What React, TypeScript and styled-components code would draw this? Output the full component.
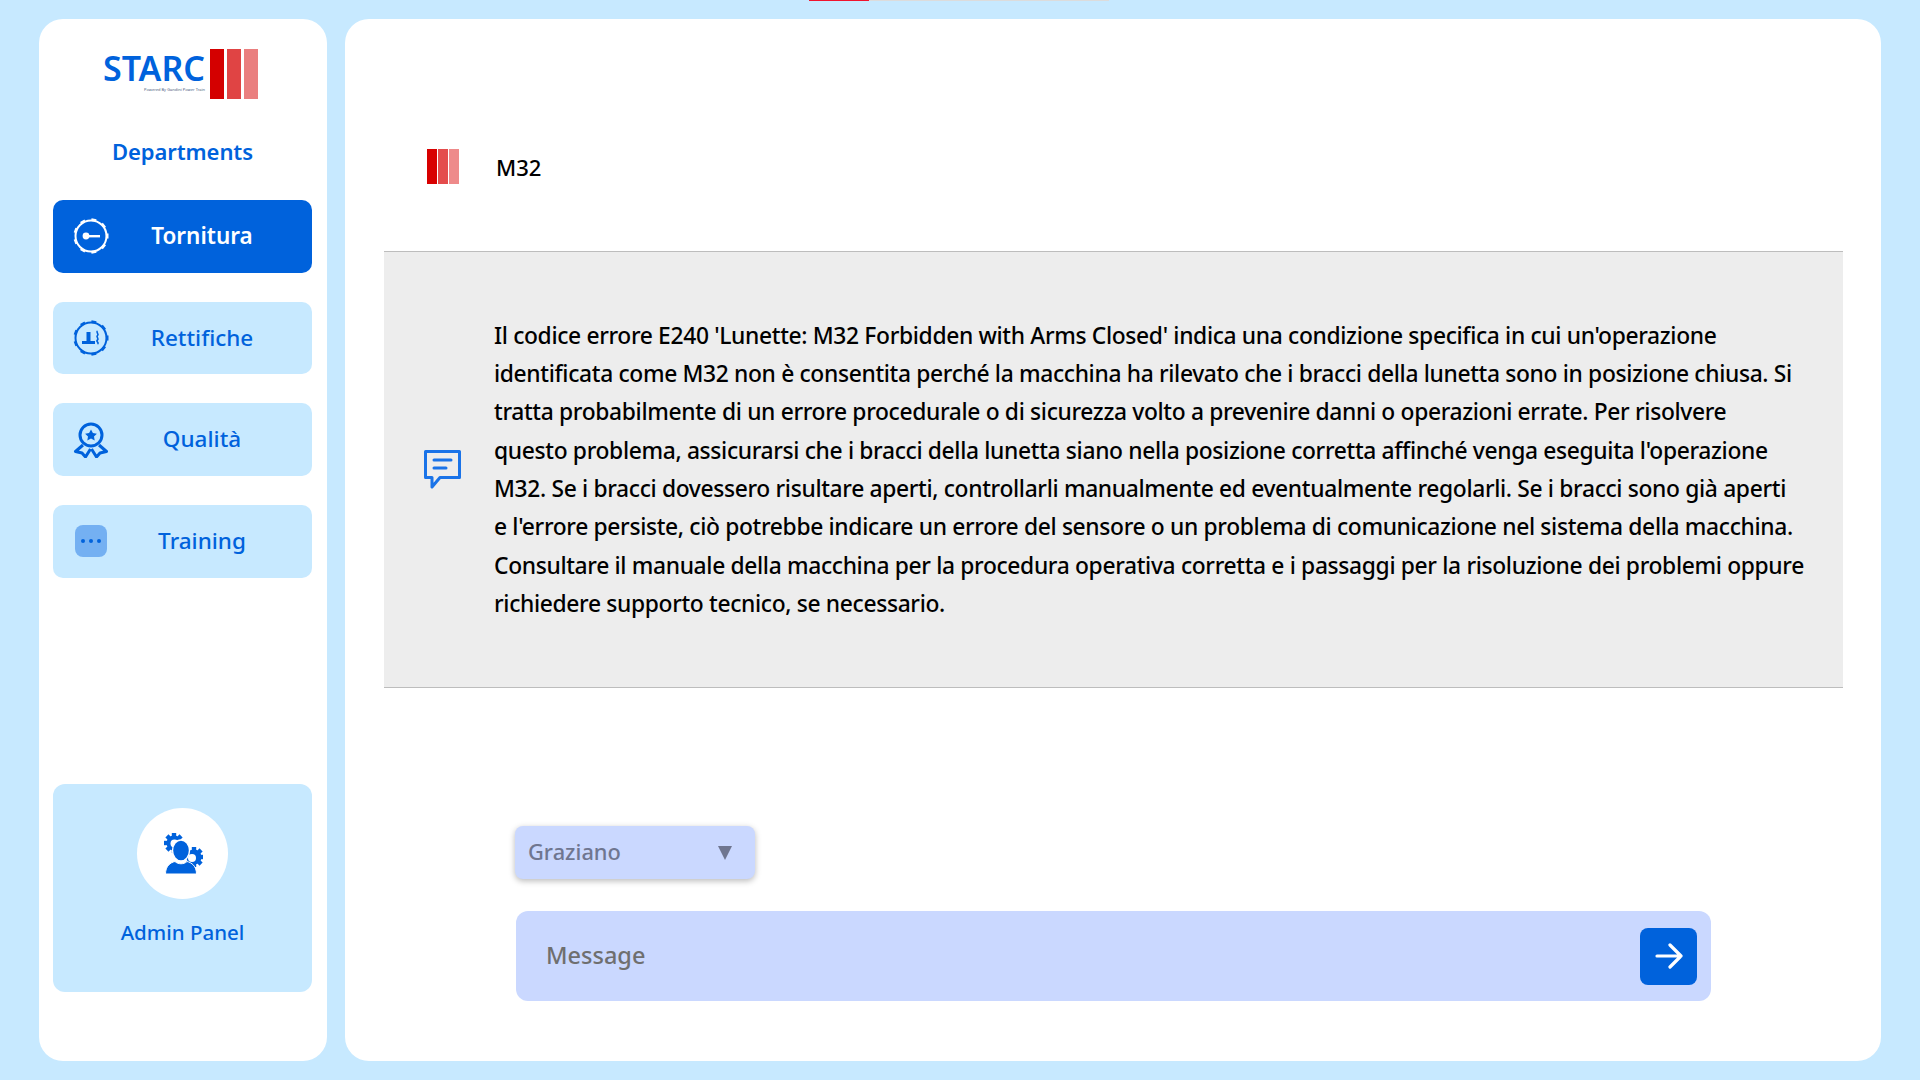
import React from "react";
import styled, { createGlobalStyle } from "styled-components";

const BLUE = "#0062dc";
const SKY = "#c7e9ff";
const PERI = "#cad8ff";
const FONT = `"Noto Sans", "Open Sans", sans-serif`;

const Global = createGlobalStyle`
  html, body { margin: 0; padding: 0; height: 100%; background: ${SKY}; }
  body { font-family: ${FONT}; overflow: hidden; }
  * { box-sizing: border-box; }
`;

const Progress = styled.div`
  position: fixed;
  top: 0;
  left: 809px;
  width: 300px;
  height: 1px;
  background: #dcdcdc;
`;
const ProgressFill = styled.div`
  width: 60px;
  height: 100%;
  background: #f0132d;
`;

const Page = styled.div`
  display: flex;
  gap: 18px;
  width: 1920px;
  height: 1080px;
  padding: 19px 39px 19px 39px;
`;

const Sidebar = styled.aside`
  width: 288px;
  background: #fff;
  border-radius: 24px;
  padding: 30px 15px 69px 14px;
  display: flex;
  flex-direction: column;
`;

const Logo = styled.div`
  display: flex;
  align-items: flex-start;
  justify-content: center;
  gap: 5px;
  height: 50px;
  padding-right: 4px;
`;
const LogoWords = styled.div`
  display: flex;
  flex-direction: column;
  align-items: flex-end;
  padding-top: 4px;
`;
const LogoName = styled.span`
  font-size: 34px;
  line-height: 30px;
  font-weight: 600;
  color: ${BLUE};
`;
const LogoTag = styled.span`
  font-size: 4px;
  line-height: 6px;
  color: #4a5d80;
  margin-top: 4px;
`;
const LogoBars = styled.div`
  display: flex;
  gap: 3px;
`;
const LogoBar = styled.span<{ $c: string }>`
  width: 14px;
  height: 50px;
  background: ${(p) => p.$c};
`;

const Title = styled.h2`
  margin: 36px 0 33px;
  height: 32px;
  font-size: 22px;
  line-height: 32px;
  font-weight: 600;
  color: ${BLUE};
  text-align: center;
  letter-spacing: -0.1px;
`;

const Nav = styled.nav`
  display: flex;
  flex-direction: column;
  gap: 29px;
`;

const NavItem = styled.div<{ $active?: boolean }>`
  height: 72.7px;
  border-radius: 10px;
  display: flex;
  align-items: center;
  padding: 0 17px 0 20px;
  background: ${(p) => (p.$active ? BLUE : SKY)};
  color: ${(p) => (p.$active ? "#fff" : BLUE)};
`;
const NavLabel = styled.span<{ $active?: boolean }>`
  flex: 1;
  text-align: center;
  font-size: 22.5px;
  line-height: 30px;
  padding-bottom: 1px;
  font-weight: ${(p) => (p.$active ? 600 : 500)};
`;

const AdminCard = styled.div`
  margin-top: auto;
  height: 208px;
  border-radius: 12px;
  background: ${SKY};
  padding-top: 24px;
  display: flex;
  flex-direction: column;
  align-items: center;
`;
const AdminCircle = styled.div`
  width: 91px;
  height: 91px;
  border-radius: 50%;
  background: #fff;
  color: ${BLUE};
  display: flex;
  align-items: center;
  justify-content: center;
`;
const AdminLabel = styled.span`
  margin-top: 17px;
  font-size: 20.5px;
  line-height: 32px;
  font-weight: 500;
  color: ${BLUE};
`;

const Main = styled.main`
  flex: 1;
  background: #fff;
  border-radius: 24px;
  padding: 0 38px 0 39px;
  display: flex;
  flex-direction: column;
`;

const Header = styled.header`
  height: 232px;
  padding: 130px 0 0 43px;
  display: flex;
  align-items: flex-start;
  gap: 37px;
`;
const HeaderBars = styled.div`
  display: flex;
  gap: 1px;
`;
const HeaderBar = styled.span<{ $c: string }>`
  width: 10px;
  height: 35px;
  background: ${(p) => p.$c};
`;
const HeaderTitle = styled.span`
  font-size: 22px;
  line-height: 37px;
  font-weight: 500;
  color: #000;
`;

const Reply = styled.section`
  height: 437px;
  background: #ededed;
  border-top: 1px solid #bdbdbd;
  border-bottom: 1px solid #bdbdbd;
  padding-left: 40px;
  display: flex;
  align-items: center;
  gap: 33px;
  color: ${BLUE};
`;
const ReplyText = styled.div`
  font-size: 22.8px;
  line-height: 38.3px;
  font-weight: 500;
  letter-spacing: -0.335px;
  color: #000;
  padding-top: 1px;
`;
const ReplyLine = styled.span`
  display: block;
  white-space: nowrap;
`;

const Composer = styled.div`
  margin: 138px 0 0 131px;
  width: 1196px;
  display: flex;
  flex-direction: column;
  gap: 32px;
`;
const Picker = styled.div`
  width: 240px;
  height: 53px;
  border-radius: 8px;
  background: ${PERI};
  box-shadow: 0 2px 6px rgba(0, 0, 0, 0.28);
  padding: 0 23px 2px 13px;
  display: flex;
  align-items: center;
  justify-content: space-between;
  font-size: 21.8px;
  font-weight: 500;
  color: #6f7690;
`;
const Caret = styled.span`
  width: 0;
  height: 0;
  margin-top: 2px;
  border-left: 7px solid transparent;
  border-right: 7px solid transparent;
  border-top: 14px solid #6f7690;
`;
const MessageBar = styled.div`
  height: 90px;
  margin-left: 1px;
  border-radius: 12px;
  background: ${PERI};
  padding: 0 14px 0 30px;
  display: flex;
  align-items: center;
`;
const MessageInput = styled.input`
  flex: 1;
  border: 0;
  outline: 0;
  padding: 0 0 2px;
  background: transparent;
  font-family: ${FONT};
  font-size: 23.5px;
  font-weight: 500;
  &::placeholder { color: #6f6f6f; opacity: 1; }
`;
const SendButton = styled.button`
  width: 57px;
  height: 57px;
  border: 0;
  padding: 0;
  border-radius: 8px;
  background: ${BLUE};
  color: #fff;
  display: flex;
  align-items: center;
  justify-content: center;
`;

const GearRing: React.FC<{ children: React.ReactNode }> = ({ children }) => (
  <svg width="36" height="36" viewBox="0 0 36 36" fill="none" stroke="currentColor">
    <circle cx="18" cy="18" r="15.5" strokeWidth="2" />
    {[0, 40, 80, 120, 160, 200, 240, 280, 320].map((a) => (
      <rect key={a} x="15.5" y="0.5" width="5" height="2.6" fill="currentColor" stroke="none" transform={`rotate(${a + 10} 18 18)`} />
    ))}
    {children}
  </svg>
);

const TurnIcon = () => (
  <GearRing>
    <circle cx="13" cy="18" r="3.4" fill="currentColor" stroke="none" />
    <rect x="16" y="17" width="11" height="2.4" fill="currentColor" stroke="none" />
  </GearRing>
);
const GrindIcon = () => (
  <GearRing>
    <rect x="9" y="21" width="13" height="3" fill="currentColor" stroke="none" />
    <rect x="13.5" y="12" width="4" height="9" fill="currentColor" stroke="none" />
    <path d="M24.5 11c-2 1.5 2 3 0 4.5s2 3 0 4.5 2 2.5 0 4" strokeWidth="1.6" />
  </GearRing>
);
const AwardIcon = () => (
  <svg width="36" height="36" viewBox="0 0 36 36" fill="none" stroke="currentColor" strokeWidth="3" strokeLinejoin="round">
    <circle cx="18" cy="13" r="11" />
    <path fill="currentColor" stroke="none" d="M18 7.5l1.900 3.600 4 .6-2.900 2.800.7 4-3.700-1.900-3.700 1.900.7-4-2.900-2.800 4-.6z" />
    <path d="M10 23L2.500 29.500l6.500 1.500 3.500 4 5-8" />
    <path d="M26 23l7.500 6.500-6.500 1.500-3.500 4-5-8" />
  </svg>
);
const DotsTile = styled.div`
  width: 32px;
  height: 32px;
  margin: 0 2px;
  border-radius: 8px;
  background: #74b0f2;
  color: ${BLUE};
  display: flex;
  align-items: center;
  justify-content: center;
`;
const DotsIcon = () => (
  <DotsTile>
    <svg width="22" height="6" viewBox="0 0 22 6" fill="currentColor">
      <circle cx="3" cy="3" r="2" />
      <circle cx="11" cy="3" r="2" />
      <circle cx="19" cy="3" r="2" />
    </svg>
  </DotsTile>
);
const AdminIcon = () => (
  <svg width="40" height="42" viewBox="0 0 40 42" fill="currentColor">
    <g>
      <circle cx="11" cy="10" r="7.5" />
      {[0, 45, 90, 135, 180, 225, 270, 315].map((a) => (
        <rect key={a} x="8.800" y="0" width="4.400" height="4" transform={`rotate(${a} 11 10)`} />
      ))}
      <circle cx="31" cy="24" r="7.5" />
      {[0, 45, 90, 135, 180, 225, 270, 315].map((a) => (
        <rect key={a} x="28.800" y="14" width="4.400" height="4" transform={`rotate(${a} 31 24)`} />
      ))}
    </g>
    <circle cx="11.500" cy="10.500" r="4" fill="#fff" />
    <circle cx="29" cy="25" r="4" fill="#fff" />
    <ellipse cx="18" cy="17.500" rx="8.500" ry="10.500" stroke="#fff" strokeWidth="1.400" />
    <path d="M2.500 41c0-8 5-11.500 9.500-12.500 3 3 9 3 12 0 4.500 1 9.500 4.500 9.500 12.500z" stroke="#fff" strokeWidth="1" />
  </svg>
);
const ChatIcon = () => (
  <svg width="37" height="39" viewBox="0 0 37 39" fill="none" stroke="#1a73e8" strokeWidth="3" strokeLinejoin="round" strokeLinecap="round">
    <path d="M1.500 1.500h34v26H16L8 37v-9.500H1.500z" />
    <path d="M10 10h17M10 18h12" />
  </svg>
);
const ArrowIcon = () => (
  <svg width="28" height="26" viewBox="0 0 28 26" fill="none" stroke="currentColor" strokeWidth="3.200" strokeLinecap="round" strokeLinejoin="round">
    <path d="M2 13h24M15 2l11 11-11 11" />
  </svg>
);

const lines = [
  "Il codice errore E240 'Lunette: M32 Forbidden with Arms Closed' indica una condizione specifica in cui un'operazione",
  "identificata come M32 non è consentita perché la macchina ha rilevato che i bracci della lunetta sono in posizione chiusa. Si",
  "tratta probabilmente di un errore procedurale o di sicurezza volto a prevenire danni o operazioni errate. Per risolvere",
  "questo problema, assicurarsi che i bracci della lunetta siano nella posizione corretta affinché venga eseguita l'operazione",
  "M32. Se i bracci dovessero risultare aperti, controllarli manualmente ed eventualmente regolarli. Se i bracci sono già aperti",
  "e l'errore persiste, ciò potrebbe indicare un errore del sensore o un problema di comunicazione nel sistema della macchina.",
  "Consultare il manuale della macchina per la procedura operativa corretta e i passaggi per la risoluzione dei problemi oppure",
  "richiedere supporto tecnico, se necessario.",
];

const departments = [
  { label: "Tornitura", icon: <TurnIcon />, active: true },
  { label: "Rettifiche", icon: <GrindIcon /> },
  { label: "Qualità", icon: <AwardIcon /> },
  { label: "Training", icon: <DotsIcon /> },
];

export default function App() {
  return (
    <>
      <Global />
      <Progress>
        <ProgressFill />
      </Progress>
      <Page>
        <Sidebar>
          <Logo>
            <LogoWords>
              <LogoName>STARC</LogoName>
              <LogoTag>Powered By Gandini Power Train</LogoTag>
            </LogoWords>
            <LogoBars>
              <LogoBar $c="#d40000" />
              <LogoBar $c="#e04444" />
              <LogoBar $c="#ea7f7f" />
            </LogoBars>
          </Logo>
          <Title>Departments</Title>
          <Nav>
            {departments.map((d) => (
              <NavItem key={d.label} $active={d.active}>
                {d.icon}
                <NavLabel $active={d.active}>{d.label}</NavLabel>
              </NavItem>
            ))}
          </Nav>
          <AdminCard>
            <AdminCircle>
              <AdminIcon />
            </AdminCircle>
            <AdminLabel>Admin Panel</AdminLabel>
          </AdminCard>
        </Sidebar>
        <Main>
          <Header>
            <HeaderBars>
              <HeaderBar $c="#d80000" />
              <HeaderBar $c="#e44c4c" />
              <HeaderBar $c="#ee8a8a" />
            </HeaderBars>
            <HeaderTitle>M32</HeaderTitle>
          </Header>
          <Reply>
            <ChatIcon />
            <ReplyText>
              {lines.map((l) => (
                <ReplyLine key={l}>{l}</ReplyLine>
              ))}
            </ReplyText>
          </Reply>
          <Composer>
            <Picker>
              Graziano
              <Caret />
            </Picker>
            <MessageBar>
              <MessageInput placeholder="Message" />
              <SendButton>
                <ArrowIcon />
              </SendButton>
            </MessageBar>
          </Composer>
        </Main>
      </Page>
    </>
  );
}
